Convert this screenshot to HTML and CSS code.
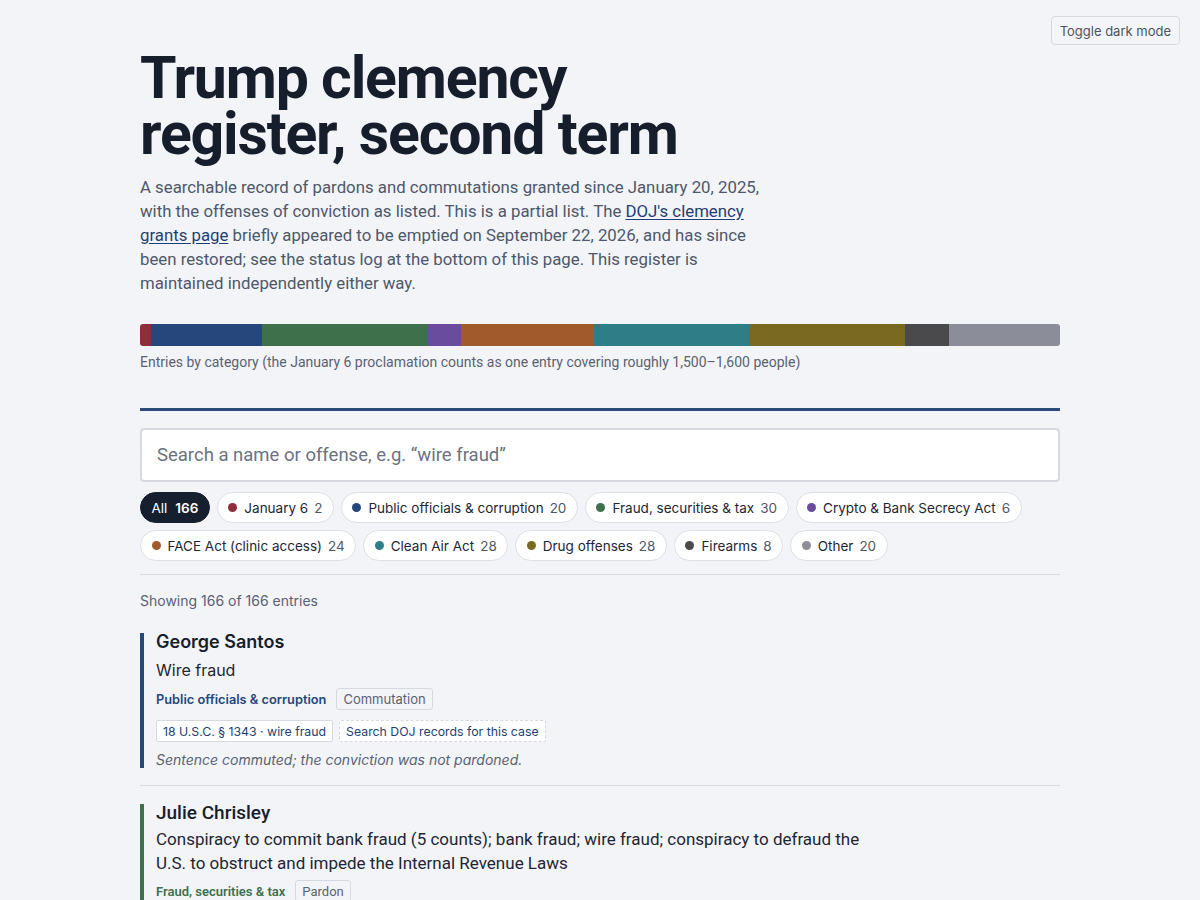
FILE: index.html
```html
<!DOCTYPE html>
<html lang="en">
<head>
<meta charset="utf-8">
<title>Trump clemency register, second term</title>
<link rel="stylesheet" href="styles.css">
</head>
<body>
<button class="toggle">Toggle dark mode</button>
<main class="page">
  <h1 class="title">Trump clemency register, second term</h1>
  <p class="lede">A searchable record of pardons and commutations granted since January 20, 2025, with the offenses of conviction as listed. This is a partial list. The <a href="#">DOJ's clemency</a> <a href="#">grants page</a> briefly appeared to be emptied on September 22, 2026, and has since been restored; see the status log at the bottom of this page. This register is maintained independently either way.</p>

  <div class="bar">
    <span class="seg c-j6" style="flex-grow:2"></span>
    <span class="seg c-pub" style="flex-grow:20"></span>
    <span class="seg c-fraud" style="flex-grow:30"></span>
    <span class="seg c-crypto" style="flex-grow:6"></span>
    <span class="seg c-face" style="flex-grow:24"></span>
    <span class="seg c-air" style="flex-grow:28"></span>
    <span class="seg c-drug" style="flex-grow:28"></span>
    <span class="seg c-fire" style="flex-grow:8"></span>
    <span class="seg c-other" style="flex-grow:20"></span>
  </div>
  <p class="caption">Entries by category (the January 6 proclamation counts as one entry covering roughly 1,500–1,600 people)</p>

  <hr class="rule">

  <input class="search" type="text" placeholder="Search a name or offense, e.g. “wire fraud”">

  <div class="chips">
    <button class="chip active">All <b>166</b></button>
    <button class="chip"><i class="dot c-j6"></i>January 6 <b>2</b></button>
    <button class="chip"><i class="dot c-pub"></i>Public officials &amp; corruption <b>20</b></button>
    <button class="chip"><i class="dot c-fraud"></i>Fraud, securities &amp; tax <b>30</b></button>
    <button class="chip"><i class="dot c-crypto"></i>Crypto &amp; Bank Secrecy Act <b>6</b></button>
    <button class="chip"><i class="dot c-face"></i>FACE Act (clinic access) <b>24</b></button>
    <button class="chip"><i class="dot c-air"></i>Clean Air Act <b>28</b></button>
    <button class="chip"><i class="dot c-drug"></i>Drug offenses <b>28</b></button>
    <button class="chip"><i class="dot c-fire"></i>Firearms <b>8</b></button>
    <button class="chip"><i class="dot c-other"></i>Other <b>20</b></button>
  </div>

  <p class="status">Showing 166 of 166 entries</p>

  <ul class="entries">
    <li class="entry b-pub inter">
      <h2 class="name">George Santos</h2>
      <p class="offense">Wire fraud</p>
      <div class="meta">
        <span class="cat t-pub">Public officials &amp; corruption</span>
        <span class="kind">Commutation</span>
      </div>
      <div class="refs">
        <span class="ref">18 U.S.C. § 1343 · wire fraud</span>
        <a class="ref dashed" href="#">Search DOJ records for this case</a>
      </div>
      <p class="note">Sentence commuted; the conviction was not pardoned.</p>
    </li>
    <li class="entry b-fraud">
      <h2 class="name">Julie Chrisley</h2>
      <p class="offense">Conspiracy to commit bank fraud (5 counts); bank fraud; wire fraud; conspiracy to defraud the U.S. to obstruct and impede the Internal Revenue Laws</p>
      <div class="meta">
        <span class="cat t-fraud">Fraud, securities &amp; tax</span>
        <span class="kind">Pardon</span>
      </div>
    </li>
  </ul>
</main>
</body>
</html>
```

FILE: styles.css
```css
* { box-sizing: border-box; }

body {
  margin: 0;
  background: #f3f4f8;
  color: #161e2c;
  font-family: Roboto, "Liberation Sans", sans-serif;
}

.toggle {
  position: absolute;
  top: 16px;
  right: 20px;
  height: 29px;
  padding: 0 8px;
  font-family: Inter, sans-serif;
  font-size: 13px;
  color: #4b5363;
  background: #f4f5f8;
  border: 1px solid #d6d9df;
  border-radius: 4px;
}

.page {
  width: 920px;
  margin: 0 auto;
  padding-top: 50px;
}

.title {
  margin: 0;
  max-width: 580px;
  font-family: Roboto, sans-serif;
  font-weight: 700;
  font-size: 59px;
  line-height: 56px;
  letter-spacing: -0.02em;
  color: #161e2c;
}

.lede {
  margin: 13px 0 0;
  max-width: 635px;
  font-size: 16.8px;
  line-height: 24px;
  color: #4d586a;
}
.lede a { color: #1f3e74; text-decoration: underline; text-underline-offset: 2px; }

.bar {
  display: flex;
  height: 22px;
  margin-top: 29px;
  border-radius: 3px;
  overflow: hidden;
}
.seg { flex-basis: 0; }

.c-j6 { background: #8f2d3a; }
.c-pub { background: #25477b; }
.c-fraud { background: #3f704c; }
.c-crypto { background: #6a4c9e; }
.c-face { background: #a15a2b; }
.c-air { background: #2e7e88; }
.c-drug { background: #7a6a21; }
.c-fire { background: #4a4a4c; }
.c-other { background: #8b8e99; }

.caption {
  margin: 7px 0 0;
  font-size: 14px;
  line-height: 18px;
  color: #5a6272;
}

.rule {
  margin: 37px 0 0;
  border: 0;
  height: 3px;
  background: #2b4a78;
}

.search {
  display: block;
  width: 100%;
  height: 54px;
  margin-top: 17px;
  padding: 0 15px;
  font-family: Roboto, sans-serif;
  font-size: 18.5px;
  color: #161e2c;
  background: #fff;
  border: 2px solid #d5d8de;
  border-radius: 4px;
}
.search::placeholder { color: #6b7280; }

.chips {
  display: flex;
  flex-wrap: wrap;
  gap: 7px;
  margin-top: 10px;
  padding-bottom: 13px;
  border-bottom: 1px solid #d8dbe1;
}
.chip {
  display: inline-flex;
  align-items: center;
  height: 31px;
  padding: 0 10.5px;
  font-family: Inter, sans-serif;
  font-size: 13.5px;
  color: #1e2633;
  background: #fff;
  border: 1px solid #dcdfe4;
  border-radius: 16px;
}
.chip b { font-weight: 400; color: #4f5767; margin-left: 6px; }
.chip.active { background: #161f2e; border-color: #161f2e; color: #fff; }
.chip.active b { color: #fff; font-weight: 600; margin-left: 8px; }
.dot {
  width: 9px;
  height: 9px;
  border-radius: 50%;
  margin-right: 7px;
}

.status {
  margin: 17px 0 0;
  font-family: Inter, sans-serif;
  font-size: 14px;
  color: #5a6272;
}

.entries {
  list-style: none;
  margin: 24px 0 0;
  padding: 0;
}
.entry {
  padding: 0 0 0 12px;
  border-left: 4px solid;
  position: relative;
}
.entry:first-child { margin-bottom: 36px; }
.entry:first-child::after {
  content: "";
  position: absolute;
  left: -4px;
  right: 0;
  bottom: -18px;
  height: 1px;
  background: #d8dbe1;
}
.b-pub { border-left-color: #25477b; }
.b-fraud { border-left-color: #3f704c; }

.name {
  margin: 0;
  font-size: 18px;
  font-weight: 600;
  line-height: 18px;
  color: #161e2c;
}
.offense {
  margin: 7px 0 0;
  max-width: 705px;
  font-size: 17px;
  line-height: 24px;
  color: #1e2633;
}
.meta {
  display: flex;
  align-items: center;
  gap: 10px;
  margin-top: 6px;
}
.cat { font-size: 12.8px; font-weight: 600; }
.t-pub { color: #25477b; }
.t-fraud { color: #3f704c; }
.kind {
  height: 22px;
  display: inline-flex;
  align-items: center;
  font-size: 13px;
  color: #5a6272;
  padding: 0 6px;
  border: 1px solid #d6d9df;
  border-radius: 3px;
  background: #f3f4f8;
}
.refs {
  display: flex;
  gap: 6px;
  margin-top: 10px;
}
.ref {
  height: 22px;
  display: inline-flex;
  align-items: center;
  font-size: 12.3px;
  color: #1f3e74;
  background: #fff;
  padding: 0 6px;
  border: 1px solid #d6d9df;
  border-radius: 2px;
  text-decoration: none;
}
.ref.dashed { border-style: dashed; }
.note {
  margin: 9px 0 0;
  font-size: 14px;
  line-height: 17px;
  font-style: italic;
  color: #5a6272;
}

.inter .name, .inter .offense, .inter .cat, .inter .kind, .inter .ref, .inter .note {
  font-family: Inter, sans-serif;
}
.inter .offense { font-size: 16px; }
.entry:not(.inter) .name { font-weight: 500; font-size: 19px; }
.entry:not(.inter) .offense { margin-top: 5px; }
.entry:not(.inter) .meta { margin-top: 5px; }
.entry:not(.inter) .cat { font-size: 13px; }
```
